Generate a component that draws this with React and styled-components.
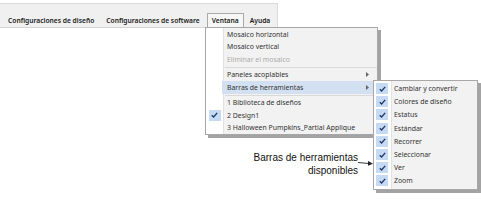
import React from "react";
import styled, { createGlobalStyle } from "styled-components";

const GlobalStyle = createGlobalStyle`
  html, body {
    margin: 0;
    padding: 0;
    background: #fff;
  }
  body {
    font-family: "Noto Sans", "Open Sans", sans-serif;
  }
`;

const Page = styled.div`
  position: relative;
  width: 481px;
  height: 202px;
  overflow: hidden;
  background: #fff;
`;

const MenuBar = styled.div`
  display: flex;
  align-items: flex-end;
  box-sizing: border-box;
  width: 278px;
  height: 25px;
  margin-top: 3px;
  padding-left: 3px;
  background: #f0f0f0;
  border-top: 1px solid #dadada;
  border-right: 1px solid #dadada;
  border-bottom: 1px solid #d4d4d4;
`;

const BarItem = styled.div`
  box-sizing: border-box;
  height: 15px;
  margin-bottom: -1px;
  padding: 0 ${(p) => p.$pad || 4}px;
  font-size: 6.7px;
  font-weight: 600;
  line-height: 14px;
  color: #1a1a1a;
  white-space: nowrap;
  border: 1px solid ${(p) => (p.$active ? "#a9a9a9" : "transparent")};
  border-bottom: none;
  background: ${(p) => (p.$active ? "#f7f7f7" : "transparent")};
`;

const Menu = styled.div`
  position: absolute;
  left: ${(p) => p.$left}px;
  top: ${(p) => p.$top}px;
  width: ${(p) => p.$width}px;
  box-sizing: border-box;
  border: 1px solid #a7a7a7;
  background: linear-gradient(
    to right,
    #fff 0,
    #fff ${(p) => p.$gutter}px,
    #e2e2e2 ${(p) => p.$gutter}px,
    #e2e2e2 ${(p) => p.$gutter + 1}px,
    #f2f2f2 ${(p) => p.$gutter + 1}px
  );
  box-shadow: 3px 3px 0 #a3a3a3;
  padding: ${(p) => p.$pad || 0}px 0;
`;

const Item = styled.div`
  display: flex;
  align-items: center;
  height: ${(p) => p.$h}px;
  padding-right: 8px;
  font-size: 6.9px;
  color: ${(p) => (p.$disabled ? "#ababab" : "#333")};
  white-space: nowrap;
  background: ${(p) =>
    p.$hover
      ? `linear-gradient(to right, transparent ${p.$gutter - 1}px, #d3e0f1 ${p.$gutter - 1}px)`
      : "transparent"};
`;

const CheckCell = styled.div`
  display: flex;
  align-items: center;
  justify-content: center;
  flex: none;
  width: ${(p) => p.$w}px;
  height: 100%;
`;

const CheckBox = styled.div`
  display: flex;
  align-items: center;
  justify-content: center;
  width: ${(p) => p.$size}px;
  height: ${(p) => p.$size - 1}px;
  background: #c7daf4;
`;

const Label = styled.span`
  flex: 1;
  padding-left: ${(p) => p.$indent}px;
`;

const Separator = styled.div`
  height: 3px;
  margin-left: ${(p) => p.$gutter + 2}px;
  background: linear-gradient(#f2f2f2 1px, #d9d9d9 1px, #d9d9d9 2px, #f2f2f2 2px);
`;

const Callout = styled.div`
  position: absolute;
  right: 123px;
  top: 151px;
  font-family: "Liberation Sans", Arial, sans-serif;
  font-size: 10px;
  line-height: 13px;
  color: #111;
  text-align: right;
`;

const Leader = styled.svg`
  position: absolute;
  left: 358px;
  top: 159px;
`;

const Check = () => (
  <svg width="7" height="6" viewBox="0 0 7 6">
    <path d="M0.8 3.2 L2.6 5 L6.2 0.8" fill="none" stroke="#1d3766" strokeWidth="1.3" />
  </svg>
);

const SubArrow = () => (
  <svg width="3" height="5" viewBox="0 0 3 5">
    <polygon points="0,0 3,2.5 0,5" fill="#666" />
  </svg>
);

const windowItems = [
  { label: "Mosaico horizontal" },
  { label: "Mosaico vertical" },
  { label: "Eliminar el mosaico", disabled: true },
  { sep: true },
  { label: "Paneles acoplables", sub: true },
  { label: "Barras de herramientas", sub: true, hover: true },
  { sep: true },
  { label: "1 Biblioteca de diseños" },
  { label: "2 Design1", checked: true },
  { label: "3 Halloween Pumpkins_Partial Applique" },
];

const toolbars = [
  "Cambiar y convertir",
  "Colores de diseño",
  "Estatus",
  "Estándar",
  "Recorrer",
  "Seleccionar",
  "Ver",
  "Zoom",
];

const App = () => (
  <Page>
    <GlobalStyle />
    <MenuBar>
      <BarItem>Configuraciones de diseño</BarItem>
      <BarItem $pad={6}>Configuraciones de software</BarItem>
      <BarItem $active>Ventana</BarItem>
      <BarItem $pad={5}>Ayuda</BarItem>
    </MenuBar>

    <Menu $left={205} $top={27} $width={173} $gutter={17}>
      {windowItems.map((it, i) =>
        it.sep ? (
          <Separator key={i} $gutter={17} />
        ) : (
          <Item key={i} $h={12.5} $gutter={17} $hover={it.hover} $disabled={it.disabled}>
            <CheckCell $w={17}>
              {it.checked && (
                <CheckBox $size={12}>
                  <Check />
                </CheckBox>
              )}
            </CheckCell>
            <Label $indent={4}>{it.label}</Label>
            {it.sub && <SubArrow />}
          </Item>
        )
      )}
    </Menu>

    <Menu $left={373} $top={80} $width={105} $gutter={17} $pad={1}>
      {toolbars.map((t) => (
        <Item key={t} $h={13.2} $gutter={17}>
          <CheckCell $w={16}>
            <CheckBox $size={12}>
              <Check />
            </CheckBox>
          </CheckCell>
          <Label $indent={4}>{t}</Label>
        </Item>
      ))}
    </Menu>

    <Callout>
      Barras de herramientas
      <br />
      disponibles
    </Callout>
    <Leader width="16" height="8" viewBox="0 0 16 8">
      <path d="M0 3.5 L11 4.5" stroke="#222" strokeWidth="0.9" />
      <polygon points="10,2 15,4.8 10,6.8" fill="#222" />
    </Leader>
  </Page>
);

export default App;
